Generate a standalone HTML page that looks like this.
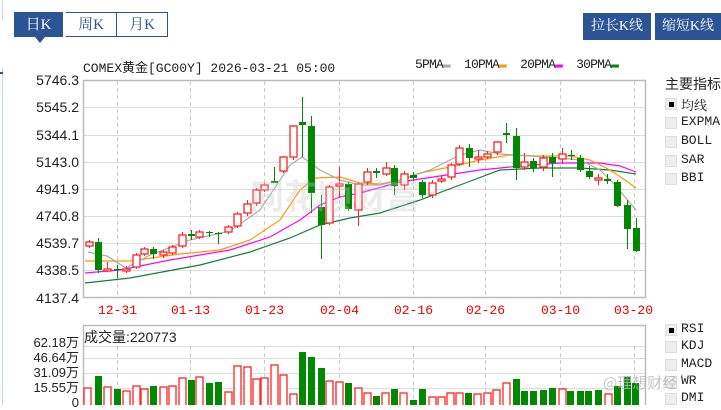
<!DOCTYPE html>
<html><head><meta charset="utf-8"><style>
body{margin:0;width:721px;height:405px;overflow:hidden;background:#fff;font-family:"Liberation Sans","Noto Sans CJK SC",sans-serif;position:relative}
.a{position:absolute}
.tab{position:absolute;top:12px;height:25px;width:49px;border:1px solid #2c5494;box-sizing:border-box;font:15px "Liberation Serif","Noto Serif CJK SC",serif;text-align:center;line-height:24px;color:#2c5494;background:#fff}
.btn{position:absolute;top:13px;height:27px;background:#2c5494;color:#fff;font:14px "Liberation Serif","Noto Serif CJK SC",serif;line-height:27px;text-align:center}
.mono{font-family:"Liberation Mono","Noto Sans CJK SC",monospace}
.cb{position:absolute;left:665px;width:12px;height:12px;background:#eee;border:1px solid #ddd;box-sizing:border-box}
.lb{position:absolute;left:681px;font:13px "Liberation Mono","Noto Serif CJK SC",monospace;color:#222}
.yl{position:absolute;right:642px;font-size:14px;color:#222;text-align:right}
.vl{position:absolute;right:642px;font-size:13px;color:#222;line-height:13px}
.dl{position:absolute;top:303px;font:13px "Liberation Mono",monospace;color:#e00}
</style></head><body>
<div class="a" style="left:2px;top:0;width:1px;height:20px;background:#c8d8ea"></div>
<div class="a" style="left:2px;top:68px;width:1px;height:337px;background:#c8d8ea"></div>
<div class="a" style="left:0;top:72px;width:3px;height:2px;background:#2c5494"></div>
<div class="tab" style="left:14px;background:#2c5494;color:#fff">日K</div>
<div class="a" style="left:35px;top:37px;width:0;height:0;border-left:5px solid transparent;border-right:5px solid transparent;border-top:6px solid #2c5494"></div>
<div class="tab" style="left:66px;border-left:none;width:51px">周K</div>
<div class="tab" style="left:116px;width:52px">月K</div>
<div class="btn" style="left:583px;width:68px">拉长K线</div>
<div class="btn" style="left:655px;width:66px">缩短K线</div>
<div class="a mono" style="left:83px;top:57px;font-size:13px;color:#222">COMEX黄金[GC00Y] 2026-03-21 05:00</div>
<div class="a mono" style="left:415px;top:57px;font-size:13px;color:#222;letter-spacing:-0.8px">5PMA<span style="color:#aaa">▬</span>&nbsp; 10PMA<span style="color:#f90">▬</span>&nbsp; 20PMA<span style="color:#f0f">▬</span>&nbsp; 30PMA<span style="color:#080">▬</span></div>
<div class="a" style="left:665px;top:74px;font:14px 'Noto Sans CJK SC',sans-serif;color:#222">主要指标</div>
<div class="cb" style="top:98px"><div style="margin:3px;width:5px;height:5px;background:#000"></div></div><div class="lb" style="top:95px">均线</div>
<div class="cb" style="top:117px"></div><div class="lb" style="top:114px">EXPMA</div>
<div class="cb" style="top:136px"></div><div class="lb" style="top:133px">BOLL</div>
<div class="cb" style="top:155px"></div><div class="lb" style="top:152px">SAR</div>
<div class="cb" style="top:173px"></div><div class="lb" style="top:170px">BBI</div>
<div class="cb" style="top:324px"><div style="margin:3px;width:5px;height:5px;background:#000"></div></div><div class="lb" style="top:321px">RSI</div>
<div class="cb" style="top:341px"></div><div class="lb" style="top:338px">KDJ</div>
<div class="cb" style="top:359px"></div><div class="lb" style="top:356px">MACD</div>
<div class="cb" style="top:376px"></div><div class="lb" style="top:373px">WR</div>
<div class="cb" style="top:393px"></div><div class="lb" style="top:390px">DMI</div>
<div class="yl" style="top:72px">5746.3</div><div class="yl" style="top:99px">5545.2</div><div class="yl" style="top:127px">5344.1</div><div class="yl" style="top:154px">5143.0</div><div class="yl" style="top:181px">4941.9</div><div class="yl" style="top:208px">4740.8</div><div class="yl" style="top:235px">4539.7</div><div class="yl" style="top:262px">4338.5</div><div class="yl" style="top:290px">4137.4</div>
<div class="vl" style="top:336px">62.18万</div><div class="vl" style="top:351px">46.64万</div><div class="vl" style="top:366px">31.09万</div><div class="vl" style="top:381px">15.55万</div><div class="vl" style="top:396px">0</div>
<div class="dl" style="left:98px">12-31</div><div class="dl" style="left:171px">01-13</div><div class="dl" style="left:245px">01-23</div><div class="dl" style="left:320px">02-04</div><div class="dl" style="left:394px">02-16</div><div class="dl" style="left:466px">02-26</div><div class="dl" style="left:541px">03-10</div><div class="dl" style="left:614px">03-20</div>
<svg class="a" style="left:0;top:0" width="721" height="405" id="s"></svg>
<div class="a" style="left:84px;top:327px;font-size:14px;color:#222">成交量:220773</div>
<div class="a" style="left:250px;top:170px;font:bold 34px 'Noto Sans CJK SC',sans-serif;color:rgba(200,200,200,0.35)">同花顺财富</div>
<div class="a" style="left:603px;top:372px;font:15px 'Noto Sans CJK SC',sans-serif;color:rgba(180,180,180,0.8)">@理想财经</div>
<script>
var s='';
function L(x1,y1,x2,y2,c,d){s+='<line x1="'+x1+'" y1="'+y1+'" x2="'+x2+'" y2="'+y2+'" stroke="'+c+'"'+(d?' stroke-dasharray="4,3"':'')+'/>';}
[107,135,162,189,216,243,270].forEach(function(y){L(83,y+.5,646,y+.5,'#ddd');});
[346,358,373,388].forEach(function(y){L(83,y+.5,646,y+.5,'#ddd');});
[117,190,264,339,413,485,560,634].forEach(function(x){L(x+.5,81,x+.5,298,'#ccc',1);L(x+.5,346,x+.5,405,'#ccc',1);});
s+='<rect x="83.5" y="80.5" width="562" height="217" fill="none" stroke="#bbb" stroke-width="1.5"/>';
s+='<rect x="83.5" y="325.5" width="562" height="90" fill="none" stroke="#bbb" stroke-width="1.5"/>';
function P(pts,c){s+='<polyline fill="none" stroke="'+c+'" stroke-width="1.2" points="'+pts+'"/>';}
P('85,283 130,278 200,265 250,252 290,238 320,225 350,218 380,213 420,200 460,185 500,170 540,168 580,168 610,170 636,174','#1a7a3a');
P('85,273 120,270 170,260 230,250 270,237 300,220 320,205 340,197 360,193 400,182 440,176 480,170 520,166 560,163 600,163 620,166 636,172','#f0f');
P('85,261 130,261 180,254 220,250 250,240 280,220 300,190 315,178 340,177 360,183 380,184 400,180 420,173 450,167 480,160 510,155 540,156 570,156 590,160 610,170 625,180 636,188','#f90');
P('88,252 107,256 126,268 150,255 190,240 230,231 260,210 290,165 302,157 320,170 340,180 360,185 380,185 400,180 430,170 460,155 480,150 500,154 530,156 560,158 580,160 600,170 615,185 636,210','#aaa');
var C=[[89,242,246,240,248,'r'],[98,242,270,238,273,'g'],[107,269,271,262,272,'r'],[117,269,270,265,278,'g'],[126,269,271,266,273,'r'],[136,255,267,253,269,'r'],[144,249,254,247,256,'r'],[153,249,254,247,259,'g'],[163,252,255,250,258,'r'],[172,247,253,245,255,'r'],[182,235,246,232,248,'r'],[191,234,236,230,240,'g'],[199,232,237,230,239,'r'],[209,232,233,231,237,'g'],[218,233,234,232,244,'g'],[228,227,232,225,234,'r'],[237,214,226,212,228,'r'],[247,204,213,200,216,'r'],[256,190,203,188,206,'r'],[264,185,190,183,192,'r'],[274,181,183,167,183,'g'],[283,157,171,156,173,'r'],[293,126,157,125,160,'r'],[302,122,125,97,157,'g'],[311,126,193,116,213,'g'],[321,207,225,195,259,'g'],[329,187,223,185,225,'r'],[339,184,186,167,198,'r'],[348,184,209,182,211,'g'],[358,184,210,182,226,'r'],[367,172,182,168,185,'r'],[376,171,173,168,178,'g'],[386,168,174,162,176,'r'],[394,168,186,165,195,'g'],[404,174,185,171,190,'r'],[413,175,178,172,181,'g'],[422,182,195,180,198,'g'],[432,183,195,180,198,'r'],[441,179,181,176,183,'r'],[451,165,177,163,180,'r'],[459,148,164,145,166,'r'],[469,148,158,144,167,'g'],[478,157,159,150,163,'r'],[487,154,157,151,159,'r'],[497,142,152,141,155,'r'],[506,133,135,123,143,'g'],[516,136,168,128,180,'g'],[524,162,167,153,170,'r'],[533,161,168,158,172,'g'],[543,158,167,155,171,'r'],[552,157,163,153,177,'g'],[562,154,159,148,164,'r'],[571,155,156,150,160,'g'],[580,158,170,155,172,'g'],[589,171,177,166,179,'g'],[598,178,180,174,185,'r'],[607,179,181,174,184,'g'],[617,182,206,180,207,'g'],[627,205,229,200,249,'g'],[636,228,251,218,252,'g']];
C.forEach(function(c){var col=c[5]=='r'?'#f22':'#080';L(c[0]+.5,c[3],c[0]+.5,c[4],col);var h=Math.max(c[2]-c[1],1);
if(c[5]=='r')s+='<rect x="'+(c[0]-3)+'" y="'+c[1]+'" width="7" height="'+h+'" fill="#fff" stroke="'+col+'" stroke-width="1.3"/>';else s+='<rect x="'+(c[0]-3)+'" y="'+c[1]+'" width="7" height="'+h+'" fill="'+col+'"/>';});
var V=[[87,388,'r'],[98,376,'g'],[107,387,'r'],[117,389,'g'],[126,391,'r'],[136,386,'r'],[144,389,'r'],[153,386,'g'],[163,387,'r'],[172,386,'r'],[182,378,'r'],[191,380,'g'],[199,377,'r'],[209,383,'g'],[218,382,'g'],[228,392,'r'],[237,366,'r'],[247,367,'r'],[256,379,'r'],[264,378,'r'],[274,365,'r'],[283,375,'r'],[293,394,'r'],[302,352,'g'],[311,357,'g'],[321,368,'g'],[329,381,'r'],[339,382,'r'],[348,383,'g'],[358,388,'r'],[367,393,'r'],[376,396,'g'],[385,393,'r'],[394,389,'g'],[403,393,'r'],[413,400,'g'],[422,389,'g'],[432,397,'r'],[441,397,'r'],[450,393,'r'],[459,393,'r'],[468,393,'g'],[477,394,'r'],[487,393,'r'],[496,390,'r'],[506,383,'r'],[516,379,'g'],[524,391,'g'],[533,391,'g'],[543,390,'g'],[552,388,'g'],[562,389,'r'],[570,391,'g'],[580,391,'g'],[588,391,'g'],[598,390,'g'],[608,394,'r'],[617,386,'g'],[627,377,'g'],[635,383,'g']];
V.forEach(function(v){if(v[2]=='r')s+='<rect x="'+(v[0]-3)+'" y="'+v[1]+'" width="7" height="'+(410-v[1])+'" fill="#fff" stroke="#f22" stroke-width="1.3"/>';else s+='<rect x="'+(v[0]-3)+'" y="'+v[1]+'" width="7" height="'+(410-v[1])+'" fill="#080"/>';});
document.getElementById('s').innerHTML=s;
</script>
</body></html>
